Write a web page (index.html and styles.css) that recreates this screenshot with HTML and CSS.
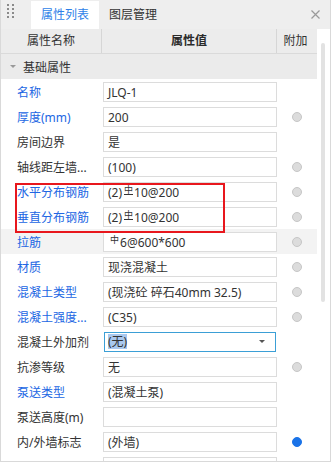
FILE: index.html
```html
<!DOCTYPE html>
<html>
    <head>
        <link rel="stylesheet" href="styles.css">
    </head>
    <body>
        <div class="panel">
            <div class="tabbar">
                <svg class="grip" width="8" height="14" viewBox="0 0 8 14">
                    <g fill="#8a8a8a">
                        <rect x="0" y="0" width="2" height="2"/><rect x="5" y="0" width="2" height="2"/>
                        <rect x="0" y="4" width="2" height="2"/><rect x="5" y="4" width="2" height="2"/>
                        <rect x="0" y="8" width="2" height="2"/><rect x="5" y="8" width="2" height="2"/>
                        <rect x="0" y="12" width="2" height="2"/><rect x="5" y="12" width="2" height="2"/>
                    </g>
                </svg>
                <div class="tab active">属性列表</div>
                <div class="tab">图层管理</div>
                <svg class="close" width="9" height="9" viewBox="0 0 9 9">
                    <path d="M0.5 0.5 L8.5 8.5 M8.5 0.5 L0.5 8.5" stroke="#9a9a9a" stroke-width="1.2"/>
                </svg>
            </div>

            <div class="main">
                <div class="grid">
                    <div class="row head">
                        <div class="c-name">属性名称</div>
                        <div class="c-val strong">属性值</div>
                        <div class="c-add">附加</div>
                    </div>
                    <div class="row group"><span class="caret"></span>基础属性</div>

                    <div class="row"><div class="c-name link">名称</div><div class="c-val"><div class="box">JLQ-1</div></div><div class="c-add"></div></div>
                    <div class="row"><div class="c-name link">厚度(mm)</div><div class="c-val"><div class="box">200</div></div><div class="c-add"><span class="dot"></span></div></div>
                    <div class="row"><div class="c-name">房间边界</div><div class="c-val"><div class="box">是</div></div><div class="c-add"></div></div>
                    <div class="row"><div class="c-name">轴线距左墙...</div><div class="c-val"><div class="box">(100)</div></div><div class="c-add"><span class="dot"></span></div></div>
                    <div class="row"><div class="c-name link">水平分布钢筋</div><div class="c-val"><div class="box">(2)<span class="sym under">中</span>10@200</div></div><div class="c-add"><span class="dot"></span></div></div>
                    <div class="row"><div class="c-name link">垂直分布钢筋</div><div class="c-val"><div class="box">(2)<span class="sym under">中</span>10@200</div></div><div class="c-add"><span class="dot"></span></div></div>
                    <div class="row hover"><div class="c-name link">拉筋</div><div class="c-val"><div class="box"><span class="sym">中</span>6@600*600</div></div><div class="c-add"><span class="dot"></span></div></div>
                    <div class="row"><div class="c-name link">材质</div><div class="c-val"><div class="box">现浇混凝土</div></div><div class="c-add"><span class="dot"></span></div></div>
                    <div class="row"><div class="c-name link">混凝土类型</div><div class="c-val"><div class="box">(现浇砼 碎石40mm 32.5)</div></div><div class="c-add"><span class="dot"></span></div></div>
                    <div class="row"><div class="c-name link">混凝土强度...</div><div class="c-val"><div class="box">(C35)</div></div><div class="c-add"><span class="dot"></span></div></div>
                    <div class="row"><div class="c-name">混凝土外加剂</div><div class="c-val"><div class="box select"><span class="sel">(无)</span><span class="drop"></span></div></div><div class="c-add"></div></div>
                    <div class="row"><div class="c-name">抗渗等级</div><div class="c-val"><div class="box">无</div></div><div class="c-add"><span class="dot"></span></div></div>
                    <div class="row"><div class="c-name link">泵送类型</div><div class="c-val"><div class="box">(混凝土泵)</div></div><div class="c-add"></div></div>
                    <div class="row"><div class="c-name">泵送高度(m)</div><div class="c-val"><div class="box"></div></div><div class="c-add"></div></div>
                    <div class="row"><div class="c-name">内/外墙标志</div><div class="c-val"><div class="box">(外墙)</div></div><div class="c-add"><span class="dot on"></span></div></div>
                    <div class="row"><div class="c-name"></div><div class="c-val"><div class="box"></div></div><div class="c-add"></div></div>

                    <div class="redbox"></div>
                </div>
                <div class="scroll"><div class="thumb"></div></div>
            </div>
        </div>
    </body>
</html>
```

FILE: styles.css
```css
body {
    margin: 0;
    padding: 0;
    font-family: "Noto Sans", "Noto Sans CJK SC", sans-serif;
    font-size: 12px;
    color: #333;
}

.panel {
    width: 331px;
    height: 462px;
    box-sizing: border-box;
    border: solid 1px #d9d9d9;
    border-top: none;
    overflow: hidden;
    background: #fff;
}

/* tab strip */
.tabbar {
    display: flex;
    align-items: flex-end;
    height: 29px;
    background: #eeeeee;
}
.grip { margin: 0 16px 8px 6px; align-self: center; }
.tab {
    height: 28px;
    line-height: 28px;
    padding: 0 10px;
}
.tab.active {
    width: 68px;
    box-sizing: border-box;
    text-align: center;
    background: #fff;
    color: #2e7fe8;
}
.close { margin-left: auto; margin-right: 10px; align-self: center; }

.main { display: flex; }
.grid { position: relative; width: 316px; }
.scroll { width: 13px; position: relative; }
.thumb {
    position: absolute;
    left: 4px;
    top: 14px;
    width: 4px;
    height: 259px;
    border-radius: 2px;
    background: #e2e2e2;
}

/* rows */
.row {
    display: flex;
    align-items: center;
    height: 25px;
}
.row.hover { background: #f3f3f3; }
.c-name {
    width: 101px;
    box-sizing: border-box;
    padding-left: 16px;
    white-space: nowrap;
}
.c-name.link { color: #2166e3; }
.c-val { width: 175px; }
.c-add { flex: 1; display: flex; justify-content: center; }

.head {
    box-sizing: border-box;
    background: #ececec;
    border-bottom: solid 1px #dadada;
}
.head .c-name, .head .c-val, .head .c-add {
    height: 24px;
    line-height: 24px;
    text-align: center;
    padding: 0;
}
.head .c-name, .head .c-val { border-right: solid 1px #d6d6d6; }
.head .c-val { width: 175px; box-sizing: border-box; }
.head .c-add { padding-right: 3px; }
.head .strong { font-weight: bold; color: #2b2b2b; }

.group {
    background: #ebebeb;
    padding-left: 9px;
}
.caret {
    width: 0;
    height: 0;
    border-left: 3px solid transparent;
    border-right: 3px solid transparent;
    border-top: 3px solid #999;
    margin-right: 7px;
}

.box {
    height: 20px;
    line-height: 19px;
    margin-left: 1px;
    box-sizing: border-box;
    border: solid 1px #dcdcdc;
    background: #fff;
    padding-left: 4px;
    white-space: nowrap;
    overflow: hidden;
}
.box.select {
    display: flex;
    align-items: center;
    border-color: #3b9fd6;
    padding-left: 3px;
    margin-left: 2px;
    width: 172px;
}
.sel { background: #a9c8ee; line-height: 15px; }
.drop {
    margin-left: auto;
    margin-right: 10px;
    border-left: 3px solid transparent;
    border-right: 3px solid transparent;
    border-top: 3px solid #555;
}

.sym {
    display: inline-block;
    font-size: 9px;
    line-height: 9px;
    vertical-align: 4px;
    margin: 0 1px 0 2px;
}
.sym.under { border-bottom: solid 1px #333; line-height: 8px; }

.dot {
    width: 8px;
    height: 8px;
    border-radius: 50%;
    background: #dcdcdc;
    border: solid 1px #c6c6c6;
}
.dot.on { background: #1a73e8; border-color: #1a73e8; }

/* highlight frame drawn over the two rebar rows */
.redbox {
    position: absolute;
    left: 14px;
    top: 154px;
    width: 210px;
    height: 50px;
    box-sizing: border-box;
    border: solid 2px #e8171d;
}
```
